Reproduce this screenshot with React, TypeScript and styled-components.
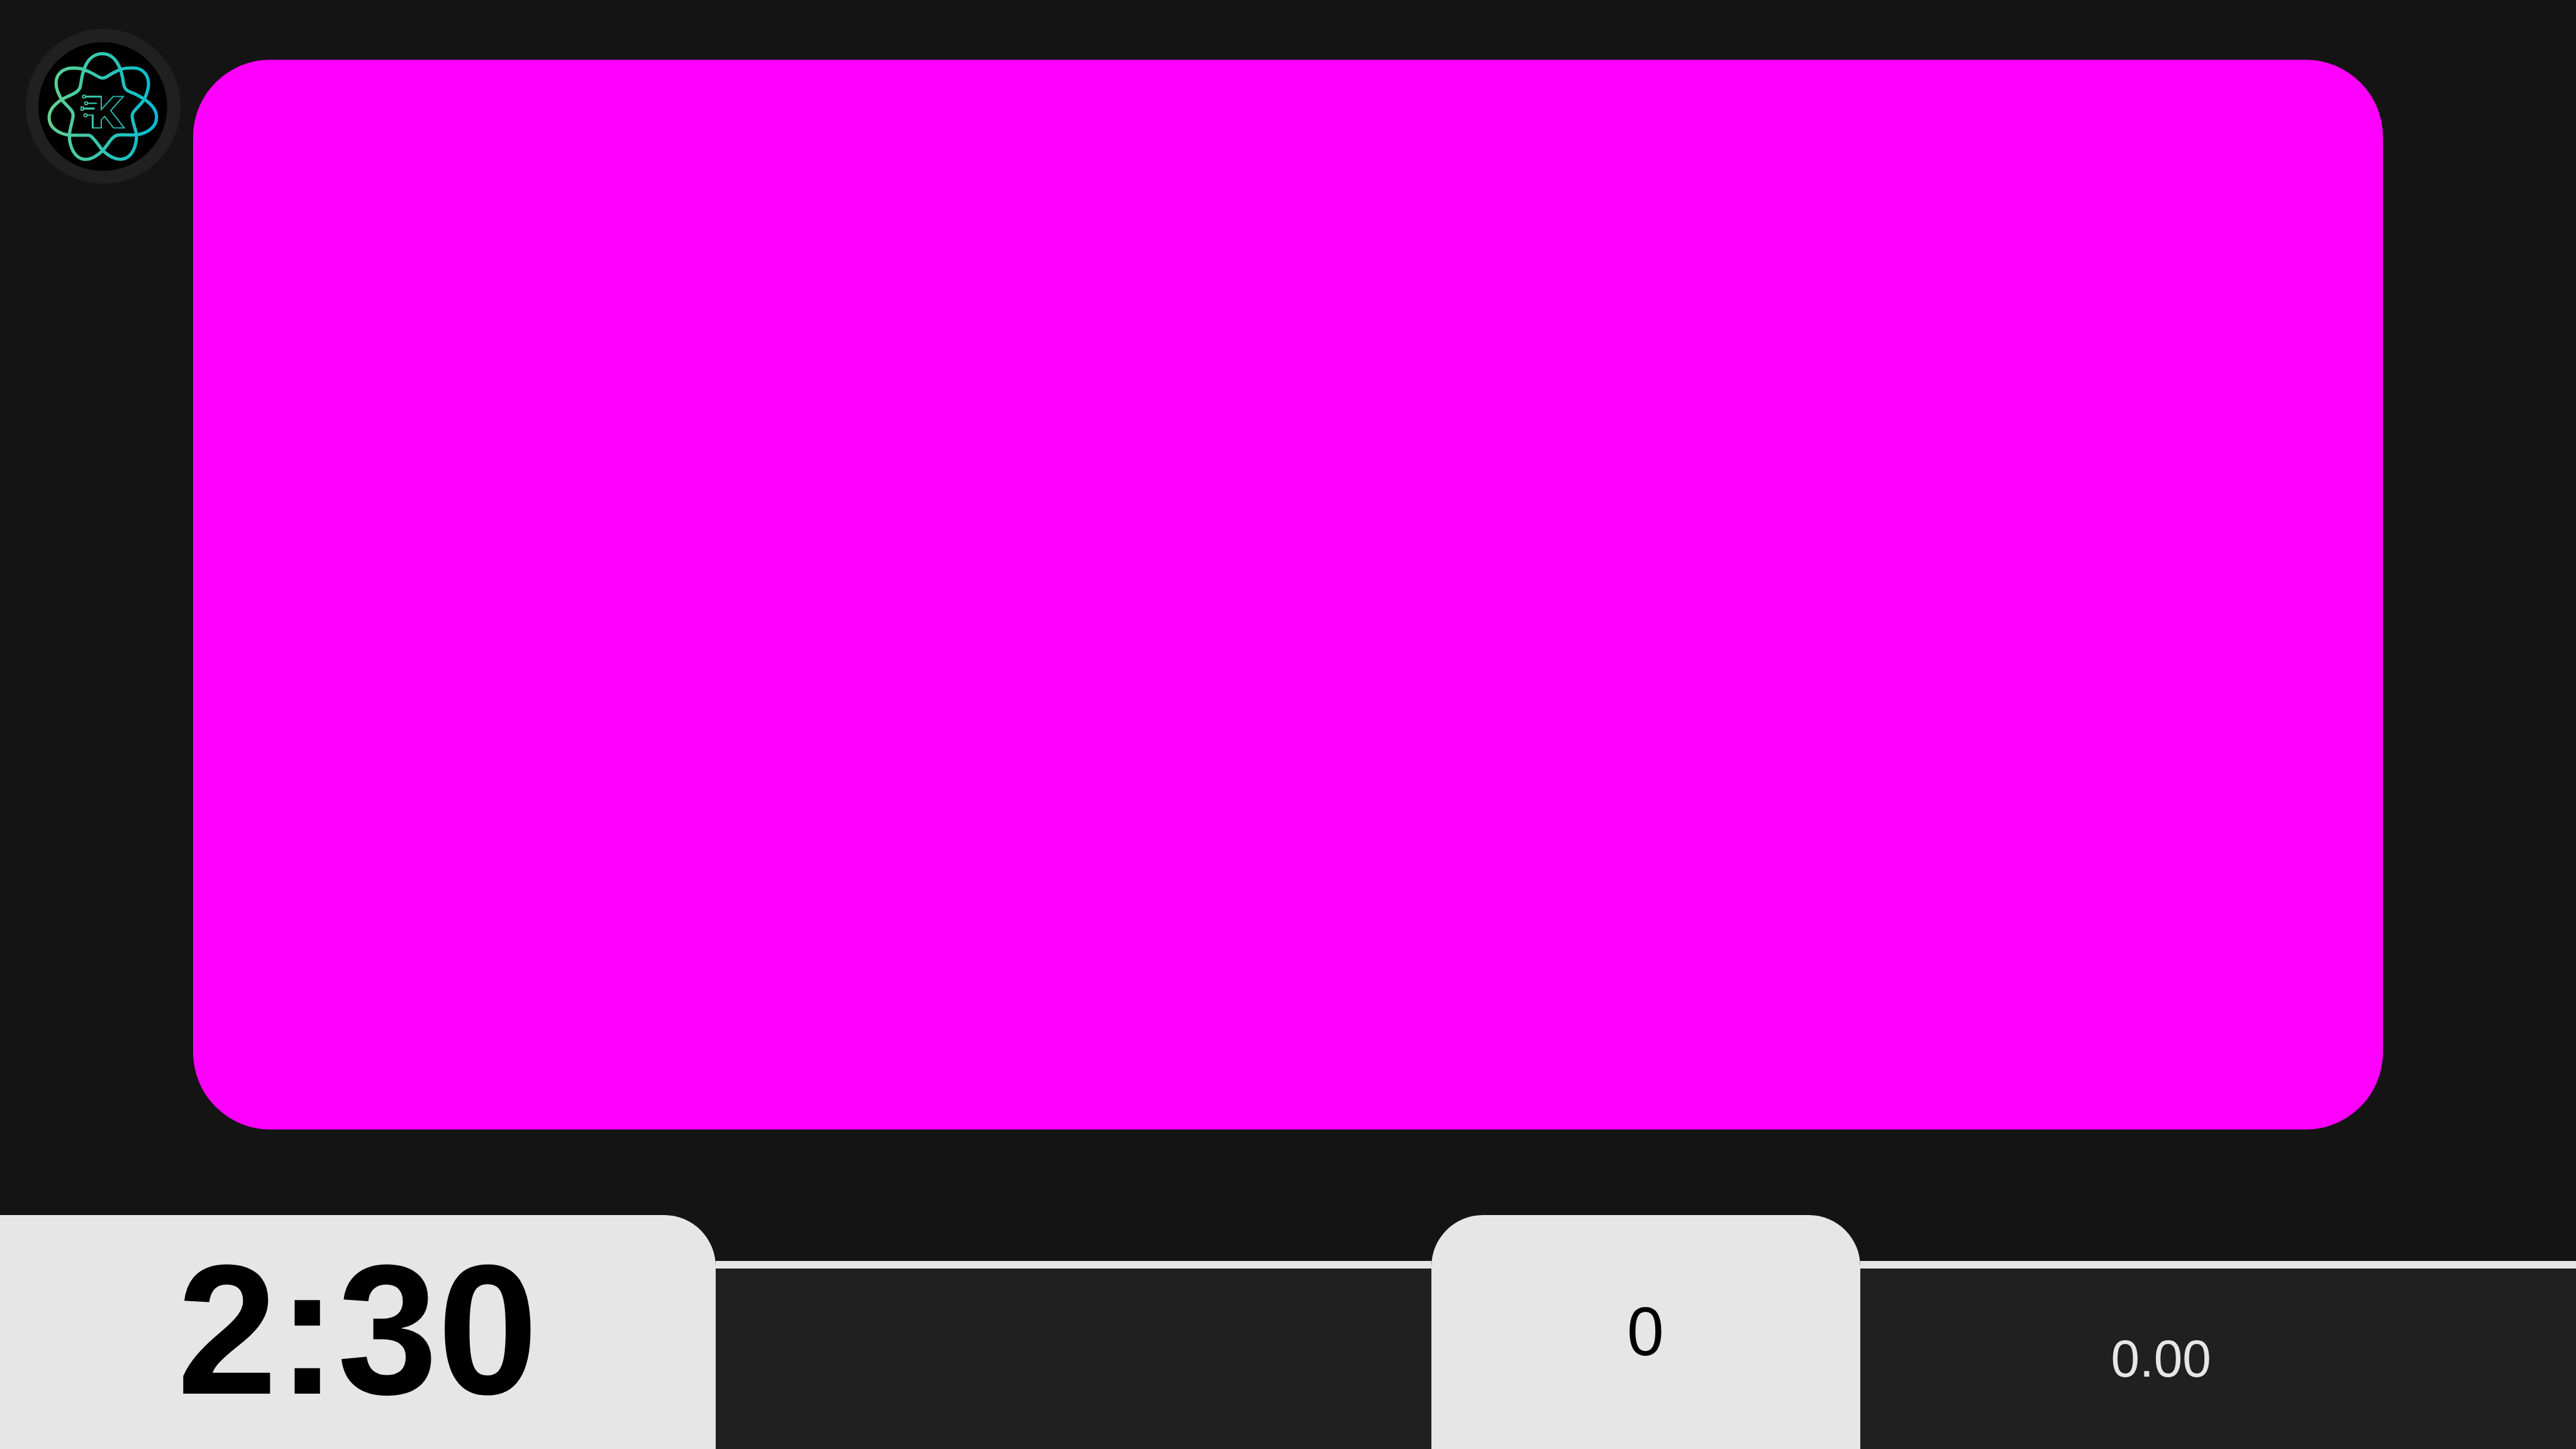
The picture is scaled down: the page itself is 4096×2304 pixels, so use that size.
import React from "react";
import styled, { createGlobalStyle } from "styled-components";

const GlobalStyle = createGlobalStyle`
  * { box-sizing: border-box; }
  html, body { margin: 0; background: #141414; }
  body { font-family: "Liberation Sans", Arial, sans-serif; overflow: hidden; }
`;

const Screen = styled.main`
  width: 4096px;
  height: 2304px;
  display: flex;
  flex-direction: column;
  justify-content: space-between;
  background: #141414;
  overflow: hidden;
`;

const Stage = styled.section`
  display: grid;
  grid-template-columns: 307.2px 1fr 307.2px;
  align-items: start;
`;

const LogoBadge = styled.div`
  width: 245.76px;
  height: 245.76px;
  margin: 46.08px 0 0 40.96px;
  padding: 20.48px;
  border-radius: 50%;
  background: #202020;
`;

const LogoDrawing = styled.svg`
  display: block;
  width: 100%;
  height: 100%;
  overflow: visible;
`;

const VideoArea = styled.div`
  height: 1701px;
  margin-top: 95px;
  border-radius: 122.88px;
  background: #ff00ff;
`;

const ScoreBar = styled.footer`
  height: 372.5px;
  display: grid;
  grid-template-columns: 5fr 5fr 3fr 5fr;
  align-items: end;
`;

const LightPanel = styled.div<{ $radius: string }>`
  height: 100%;
  display: flex;
  justify-content: center;
  align-items: flex-start;
  border-radius: ${(p) => p.$radius};
  background: #e6e6e6;
  color: #000;
`;

const DarkPanel = styled.div`
  height: 299px;
  padding-right: 182px;
  display: flex;
  justify-content: center;
  align-items: flex-start;
  border-top: 12px solid #e6e6e6;
  background: #202020;
  color: #e6e6e6;
`;

const Timer = styled.span`
  margin-top: 20.5px;
  padding-right: 1px;
  font-size: 286.72px;
  line-height: 330px;
  font-weight: 700;
  transform: scaleY(1.027);
  transform-origin: 50% 264.3px;
`;

const Count = styled.span`
  margin-top: 125px;
  padding-right: 1px;
  font-size: 105.5px;
  line-height: 122px;
  transform: scaleY(1.028);
  transform-origin: 50% 98px;
`;

const Rate = styled.span`
  margin-top: 96.7px;
  font-size: 81.92px;
  line-height: 94px;
  transform: scaleY(1.024);
  transform-origin: 50% 76px;
`;

const Logo = () => (
  <LogoDrawing viewBox="168 162 960 960" fill="none">
    <defs>
      <linearGradient id="brand" gradientUnits="userSpaceOnUse" x1="236" y1="0" x2="1060" y2="0">
        <stop offset="0" stopColor="#63d08f" />
        <stop offset="1" stopColor="#00bcd4" />
      </linearGradient>
    </defs>
    <circle cx="648" cy="642" r="480" fill="#000" />
    <path
      stroke="url(#brand)"
      strokeWidth="24"
      strokeLinejoin="round"
      d="M646 248
        C715 248 755 300 779 365
        C796 410 797 440 803 473
        C812 525 845 530 886 547
        C912 559 935 572 958 588
        C1005 620 1049 660 1049 722
        C1049 800 970 845 900 852
        C850 858 800 850 764 854
        C728 857 710 890 697 905
        C680 930 665 950 648 970
        C615 1002 570 1036 520 1036
        C440 1036 398 940 399 855
        C402 815 412 785 420 750
        C427 720 434 692 412 668
        C390 640 362 618 341 590
        C320 550 300 515 300 468
        C300 395 355 357 425 355
        C455 356 485 358 508 366
        C545 380 580 398 610 417
        C635 433 660 433 682 417
        C715 395 745 380 779 365
        C810 355 840 354 875 354
        C950 354 989 410 989 475
        C989 515 975 550 958 588
        C940 615 915 640 892 665
        C862 695 865 715 872 745
        C880 785 893 815 900 852
        C900 940 865 1035 778 1035
        C728 1035 680 1000 648 970
        C628 945 612 920 590 895
        C575 877 565 862 546 856
        C500 855 445 857 400 855
        C320 847 248 800 248 725
        C248 665 290 625 341 590
        C375 570 415 557 445 538
        C480 518 482 490 487 455
        C492 425 497 395 508 366
        C530 300 575 248 646 248 Z"
    />
    <g stroke="url(#brand)" strokeWidth="8.5">
      <path d="M637 566V664L726 567H801L707 672L808 801H728L662 716L637 742V801H572V708" />
      <path d="M519 568H640" strokeWidth="14" />
      <path d="M573 703V805" strokeWidth="14" />
      <path d="M532 706H580" />
      <path d="M538 618H604" strokeWidth="10" />
      <path d="M504 657H588" strokeWidth="15" />
      <circle cx="508" cy="567" r="11" />
      <circle cx="524" cy="618" r="11" />
      <rect x="486" y="645" width="17" height="24" />
      <ellipse cx="520" cy="707" rx="12" ry="11" />
    </g>
  </LogoDrawing>
);

export default function App() {
  return (
    <Screen>
      <GlobalStyle />
      <Stage>
        <LogoBadge>
          <Logo />
        </LogoBadge>
        <VideoArea />
      </Stage>
      <ScoreBar>
        <LightPanel $radius="0 81.92px 0 0">
          <Timer>2:30</Timer>
        </LightPanel>
        <DarkPanel />
        <LightPanel $radius="81.92px 81.92px 0 0">
          <Count>0</Count>
        </LightPanel>
        <DarkPanel>
          <Rate>0.00</Rate>
        </DarkPanel>
      </ScoreBar>
    </Screen>
  );
}
